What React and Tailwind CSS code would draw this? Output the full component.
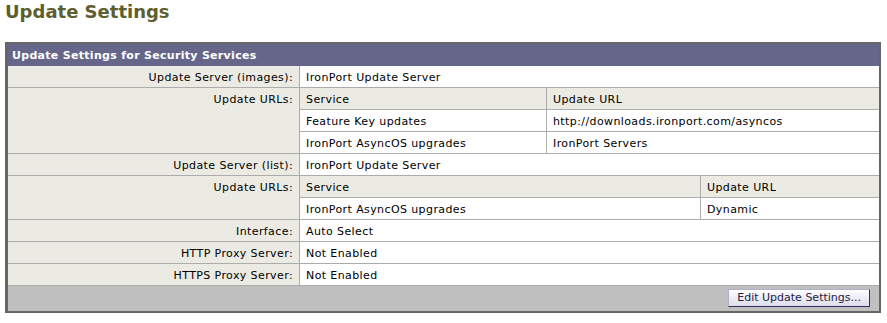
import React from "react";

const F = "font-['DejaVu_Sans',Verdana,sans-serif]";
const T = "text-[11px] leading-[13px] tracking-[0.4px]";

function Row({ label, children }) {
  return (
    <div className="flex border-b border-[#acacac]">
      <div className={"w-[292px] shrink-0 bg-[#ebebe4] text-right pr-[6px] pt-[5px] border-r border-[#acacac] text-black " + T}>
        {label}
      </div>
      <div className="flex-1 bg-white">{children}</div>
    </div>
  );
}

function Val({ children }) {
  return <div className={"h-[21px] pl-[6px] pt-[5px] text-black " + T}>{children}</div>;
}

function Nested({ split, rows }) {
  return (
    <div className="flex flex-col">
      {rows.map((r, i) => (
        <div
          key={i}
          className={
            "flex " +
            (i < rows.length - 1 ? "h-[22px] border-b border-[#acacac] " : "h-[21px] ") +
            (i === 0 ? "bg-[#ebebe4]" : "bg-white")
          }
        >
          <div className={split + " shrink-0 border-r border-[#acacac] pl-[6px] pt-[5px] " + T}>
            {r[0]}
          </div>
          <div className={"flex-1 pl-[6px] pt-[5px] " + T}>{r[1]}</div>
        </div>
      ))}
    </div>
  );
}

export default function App() {
  return (
    <div className={F + " w-[887px] h-[323px] bg-white text-black"}>
      <h1 className="pl-[5px] pt-[1px] text-[18px] leading-[22px] font-bold text-[#5e5e30]">Update Settings</h1>
      <div className="ml-[5px] mt-[19px] w-[876px] border-[#666666] border-l-[3px] border-r-[2px] border-t-[2px] border-b-[2px]">
        <div className="h-[22px] bg-[#66668a] pl-[4px] pt-[5px] text-[11px] leading-[13px] tracking-[0.3px] font-bold text-white">
          Update Settings for Security Services
        </div>
        <Row label="Update Server (images):">
          <Val>IronPort Update Server</Val>
        </Row>
        <Row label="Update URLs:">
          <Nested
            split="w-[247px]"
            rows={[
              ["Service", "Update URL"],
              ["Feature Key updates", "http://downloads.ironport.com/asyncos"],
              ["IronPort AsyncOS upgrades", "IronPort Servers"],
            ]}
          />
        </Row>
        <Row label="Update Server (list):">
          <Val>IronPort Update Server</Val>
        </Row>
        <Row label="Update URLs:">
          <Nested
            split="w-[401px]"
            rows={[
              ["Service", "Update URL"],
              ["IronPort AsyncOS upgrades", "Dynamic"],
            ]}
          />
        </Row>
        <Row label="Interface:">
          <Val>Auto Select</Val>
        </Row>
        <Row label="HTTP Proxy Server:">
          <Val>Not Enabled</Val>
        </Row>
        <Row label="HTTPS Proxy Server:">
          <Val>Not Enabled</Val>
        </Row>
        <div className="h-[25px] bg-[#bfbfbf] flex justify-end items-start pt-[3px] pr-[9px]">
          <button className="h-[18px] px-[8px] text-[11px] leading-[14px] text-[#222244] bg-gradient-to-b from-white to-[#dcdcec] border border-t-[#b0b0c8] border-l-[#b0b0c8] border-r-[#33335a] border-b-[#33335a]">
            Edit Update Settings...
          </button>
        </div>
      </div>
    </div>
  );
}
